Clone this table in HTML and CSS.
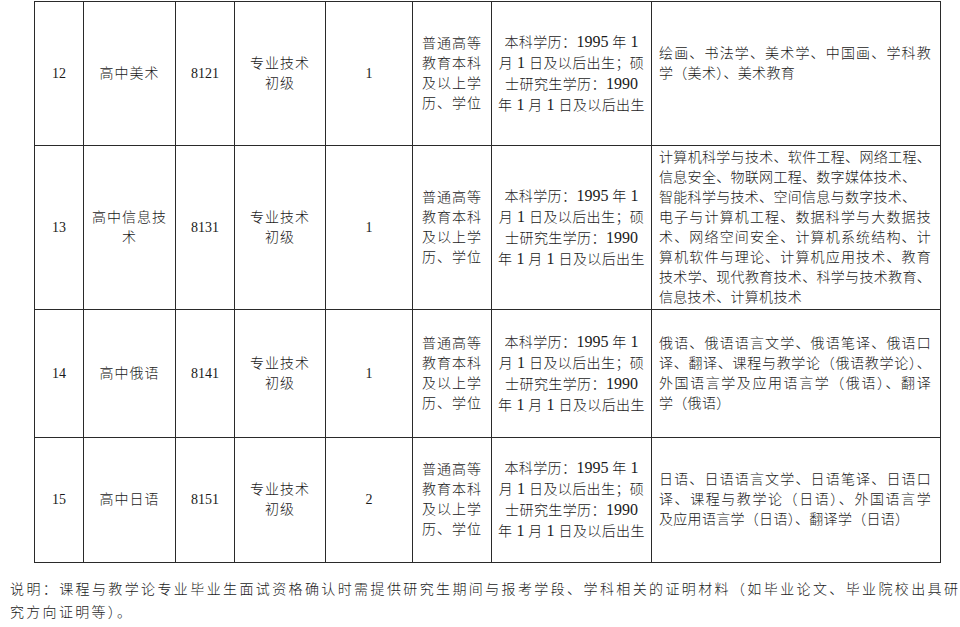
FILE: index.html
```html
<!DOCTYPE html>
<html lang="zh-CN">
<head>
<meta charset="utf-8">
<link rel="stylesheet" href="styles.css">
</head>
<body>
<div class="page">
  <div class="table-wrap">
    <table class="grid">
      <colgroup>
        <col class="c1"><col class="c2"><col class="c3"><col class="c4"><col class="c5"><col class="c6"><col class="c7"><col class="c8">
      </colgroup>
      <tbody>
        <tr class="r12">
          <td class="num">12</td>
          <td>高中美术</td>
          <td class="num">8121</td>
          <td>专业技术<br>初级</td>
          <td class="num">1</td>
          <td>普通高等<br>教育本科<br>及以上学<br>历、学位</td>
          <td class="age">本科学历：<span class="d">1995</span> 年 <span class="d">1</span><br>月 <span class="d">1</span> 日及以后出生；硕<br>士研究生学历：<span class="d">1990</span><br>年 <span class="d">1</span> 月 <span class="d">1</span> 日及以后出生</td>
          <td class="major">
            <div class="ln j">绘画、书法学、美术学、中国画、学科教</div>
            <div class="ln">学（美术）、美术教育</div>
            <div class="ln">&nbsp;</div>
          </td>
        </tr>
        <tr class="r13">
          <td class="num">13</td>
          <td>高中信息技<br>术</td>
          <td class="num">8131</td>
          <td>专业技术<br>初级</td>
          <td class="num">1</td>
          <td>普通高等<br>教育本科<br>及以上学<br>历、学位</td>
          <td class="age">本科学历：<span class="d">1995</span> 年 <span class="d">1</span><br>月 <span class="d">1</span> 日及以后出生；硕<br>士研究生学历：<span class="d">1990</span><br>年 <span class="d">1</span> 月 <span class="d">1</span> 日及以后出生</td>
          <td class="major">
            <div class="ln j">计算机科学与技术、软件工程、网络工程、</div>
            <div class="ln">信息安全、物联网工程、数字媒体技术、</div>
            <div class="ln">智能科学与技术、空间信息与数字技术、</div>
            <div class="ln j">电子与计算机工程、数据科学与大数据技</div>
            <div class="ln j">术、网络空间安全、计算机系统结构、计</div>
            <div class="ln j">算机软件与理论、计算机应用技术、教育</div>
            <div class="ln j">技术学、现代教育技术、科学与技术教育、</div>
            <div class="ln">信息技术、计算机技术</div>
          </td>
        </tr>
        <tr class="r14">
          <td class="num">14</td>
          <td>高中俄语</td>
          <td class="num">8141</td>
          <td>专业技术<br>初级</td>
          <td class="num">1</td>
          <td>普通高等<br>教育本科<br>及以上学<br>历、学位</td>
          <td class="age">本科学历：<span class="d">1995</span> 年 <span class="d">1</span><br>月 <span class="d">1</span> 日及以后出生；硕<br>士研究生学历：<span class="d">1990</span><br>年 <span class="d">1</span> 月 <span class="d">1</span> 日及以后出生</td>
          <td class="major">
            <div class="ln j">俄语、俄语语言文学、俄语笔译、俄语口</div>
            <div class="ln j">译、翻译、课程与教学论（俄语教学论）、</div>
            <div class="ln j">外国语言学及应用语言学（俄语）、翻译</div>
            <div class="ln">学（俄语）</div>
          </td>
        </tr>
        <tr class="r15">
          <td class="num">15</td>
          <td>高中日语</td>
          <td class="num">8151</td>
          <td>专业技术<br>初级</td>
          <td class="num">2</td>
          <td>普通高等<br>教育本科<br>及以上学<br>历、学位</td>
          <td class="age">本科学历：<span class="d">1995</span> 年 <span class="d">1</span><br>月 <span class="d">1</span> 日及以后出生；硕<br>士研究生学历：<span class="d">1990</span><br>年 <span class="d">1</span> 月 <span class="d">1</span> 日及以后出生</td>
          <td class="major">
            <div class="ln j">日语、日语语言文学、日语笔译、日语口</div>
            <div class="ln j">译、课程与教学论（日语）、外国语言学</div>
            <div class="ln">及应用语言学（日语）、翻译学（日语）</div>
          </td>
        </tr>
      </tbody>
    </table>
  </div>
  <div class="note">
    <div class="note-line first">说明：课程与教学论专业毕业生面试资格确认时需提供研究生期间与报考学段、学科相关的证明材料（如毕业论文、毕业院校出具研</div>
    <div class="note-line">究方向证明等）。</div>
  </div>
</div>
</body>
</html>
```

FILE: styles.css
```css
html, body {
  margin: 0;
  padding: 0;
  background: #ffffff;
}

body {
  font-family: "Liberation Serif", "Noto Sans CJK SC", serif;
  font-size: 14px;
  font-weight: 300;
  color: #1a1a1a;
}

.page {
  width: 960px;
  height: 627px;
  overflow: hidden;
}

.table-wrap {
  padding: 1px 0 0 34px;
}

.grid {
  border-collapse: collapse;
  table-layout: fixed;
  width: 906px;
}

.c1 { width: 49px; }
.c2 { width: 92px; }
.c3 { width: 59px; }
.c4 { width: 91px; }
.c5 { width: 87px; }
.c6 { width: 79px; }
.c7 { width: 160px; }
.c8 { width: 289px; }

.grid td {
  border: 1px solid #2a2a2a;
  padding: 0;
  text-align: center;
  vertical-align: middle;
  line-height: 20px;
  letter-spacing: 1px;
  white-space: nowrap;
}

.grid td.num {
  font-size: 14px;
  font-weight: 400;
  letter-spacing: 0;
}

.r12 td { height: 143px; }
.r13 td { height: 163px; }
.r14 td { height: 127px; }
.r15 td { height: 124px; }

.grid td.age {
  letter-spacing: 0.4px;
}

.d {
  font-size: 16px;
  font-weight: 400;
  letter-spacing: 0;
}

.grid td.major {
  text-align: left;
  padding: 0 9px 0 7px;
  letter-spacing: 0.3px;
}

.ln {
  white-space: nowrap;
}

.ln.j {
  text-align: justify;
  text-align-last: justify;
}

.note {
  padding: 15px 2px 0 10px;
  line-height: 23px;
}

.note-line {
  white-space: nowrap;
  letter-spacing: 2.3px;
}

.note-line.first {
  letter-spacing: 0;
  text-align: justify;
  text-align-last: justify;
}
```
